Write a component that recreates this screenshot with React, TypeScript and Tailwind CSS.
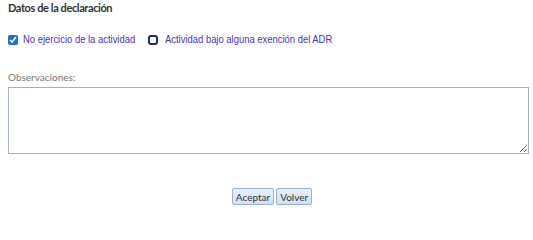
import { useState } from 'react';

export default function App() {
  const [noEjercicio, setNoEjercicio] = useState(true);
  const [exencion, setExencion] = useState(false);
  const [obs, setObs] = useState('');

  return (
    <div className="w-[533px] h-[210px] bg-white px-2 pt-[1px] font-['Lato',sans-serif]">
      <h3 className="text-[11px] font-bold text-[#333] leading-[14px] tracking-[-0.4px]">Datos de la declaración</h3>

      <div className="flex items-center mt-[17px] h-[16px] font-['Liberation_Sans',Arial,sans-serif] text-[11.5px] text-[#4a2fd0] whitespace-nowrap">
        <label className="flex items-center w-[140px]">
          <input
            type="checkbox"
            checked={noEjercicio}
            onChange={(e) => setNoEjercicio(e.target.checked)}
            className="w-[10px] h-[10px] m-0 shrink-0 accent-[#1a6fe0]"
          />
          <span className="ml-[5px] inline-block scale-x-[0.82] origin-left">No ejercicio de la actividad</span>
        </label>
        <label className="flex items-center">
          <input
            type="checkbox"
            checked={exencion}
            onChange={(e) => setExencion(e.target.checked)}
            className="w-[10px] h-[10px] m-0 shrink-0 appearance-none border-2 border-[#1c2a8c] rounded-[3px] bg-white"
          />
          <span className="ml-[7px] inline-block scale-x-[0.82] origin-left">Actividad bajo alguna exención del ADR</span>
        </label>
      </div>

      <div className="mt-[23px]">
        <label className="block text-[10px] text-[#777] leading-[13px]">Observaciones:</label>
        <textarea
          value={obs}
          onChange={(e) => setObs(e.target.value)}
          className="block w-[521px] h-[67px] mt-[3px] border border-[#9fb3cd] bg-white outline-none"
        />
      </div>

      <div className="flex justify-center gap-[2px] mt-[34px] pl-[11px]">
        <button className="h-[17px] px-[3px] text-[10px] text-[#333] border border-[#9ab0cf] rounded-[2px] bg-gradient-to-b from-[#e8f0fa] to-[#d2e0f2] leading-none">
          Aceptar
        </button>
        <button className="h-[17px] px-[3px] text-[10px] text-[#333] border border-[#9ab0cf] rounded-[2px] bg-gradient-to-b from-[#e8f0fa] to-[#d2e0f2] leading-none">
          Volver
        </button>
      </div>
    </div>
  );
}
